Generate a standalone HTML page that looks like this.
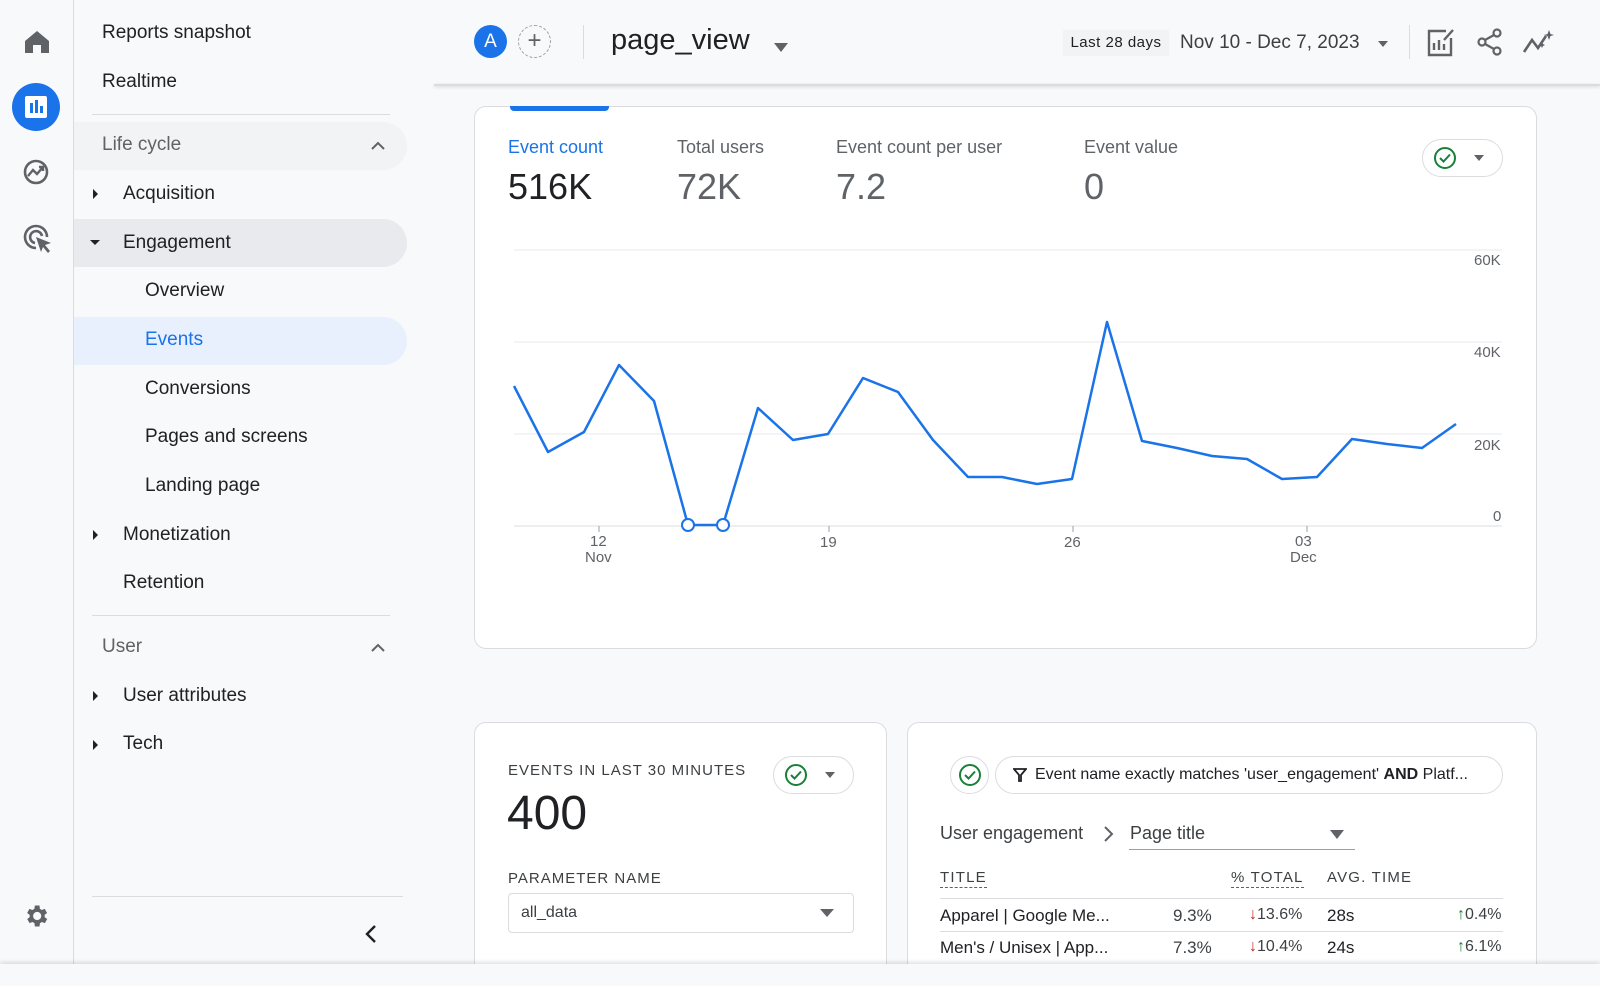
<!DOCTYPE html>
<html><head><meta charset="utf-8"><style>
*{box-sizing:border-box;margin:0;padding:0}
body{width:1600px;height:986px;background:#f8f9fa;font-family:"Liberation Sans",Arial,sans-serif;color:#202124;position:relative;overflow:hidden}
.abs{position:absolute}
.rail{left:0;top:0;width:74px;height:966px;border-right:1px solid #dadce0;background:#f8f9fa}
.nav{left:74px;top:0;width:360px;height:966px}
.item{position:absolute;font-size:19px;color:#202124}
.hl{position:absolute;left:74px;width:333px;height:48px;border-radius:0 24px 24px 0}
.card{position:absolute;background:#fff;border:1px solid #dadce0;border-radius:12px}
.lbl{font-size:18px;color:#5f6368}
.big{font-size:36px;color:#5f6368}
.tri{width:0;height:0;border-left:6px solid transparent;border-right:6px solid transparent;border-top:7px solid #5f6368;position:absolute}
.rtri{width:0;height:0;border-top:5px solid transparent;border-bottom:5px solid transparent;border-left:5px solid #202124;position:absolute}
.dtri{width:0;height:0;border-left:5px solid transparent;border-right:5px solid transparent;border-top:5px solid #202124;position:absolute}
.pill{position:absolute;border:1px solid #dadce0;border-radius:20px;background:#fff}
.ax{position:absolute;font-size:15px;color:#5f6368}
.row{position:absolute;font-size:17px;color:#202124}
</style></head><body>
<div class="abs rail">
 <svg class="abs" style="left:24px;top:30px" width="26" height="24" viewBox="0 0 26 24"><path d="M13 1 L25 11 V23 H17 V15 H9 V23 H1 V11 Z" fill="#5f6368"/></svg>
 <div class="abs" style="left:12px;top:83px;width:48px;height:48px;border-radius:50%;background:#1a73e8"></div>
 <div class="abs" style="left:25px;top:96px;width:22px;height:22px;background:#fff;border-radius:2px"></div>
 <div class="abs" style="left:30px;top:103px;width:3px;height:10px;background:#1a73e8"></div>
 <div class="abs" style="left:35px;top:100px;width:3px;height:13px;background:#1a73e8"></div>
 <div class="abs" style="left:40px;top:106px;width:3px;height:7px;background:#1a73e8"></div>
 <svg class="abs" style="left:22px;top:158px" width="30" height="30" viewBox="0 0 30 30"><circle cx="14" cy="14" r="11" fill="none" stroke="#5f6368" stroke-width="2.6"/><path d="M6 18 L11 12 L15 16 L21 9 M17 9 H21 V13" fill="none" stroke="#5f6368" stroke-width="2.4"/></svg>
 <svg class="abs" style="left:22px;top:223px" width="32" height="32" viewBox="0 0 32 32"><path d="M14 25 A11 11 0 1 1 25 14" fill="none" stroke="#5f6368" stroke-width="2.6"/><path d="M13 20 A6 6 0 1 1 20 13" fill="none" stroke="#5f6368" stroke-width="2.6"/><path d="M14 14 L29 20 L23 22 L28 28 L26 30 L21 24 L19 29 Z" fill="#5f6368"/></svg>
 <svg class="abs" style="left:22px;top:902px" width="28" height="28" viewBox="0 0 24 24"><path fill="#5f6368" d="M19.4 13a7.5 7.5 0 0 0 0-2l2.1-1.6-2-3.5-2.5 1a7 7 0 0 0-1.7-1L15 3h-4l-.4 2.9a7 7 0 0 0-1.7 1l-2.5-1-2 3.5L6.6 11a7.5 7.5 0 0 0 0 2l-2.1 1.6 2 3.5 2.5-1a7 7 0 0 0 1.7 1L11 21h4l.4-2.9a7 7 0 0 0 1.7-1l2.5 1 2-3.5zM13 15.5a3.5 3.5 0 1 1 0-7 3.5 3.5 0 0 1 0 7z"/></svg>
</div>
<div class="hl" style="top:122px;background:#f1f3f4"></div>
<div class="hl" style="top:219px;background:#e8eaed"></div>
<div class="hl" style="top:317px;background:#e8f0fe"></div>
<div class="item" style="left:102px;top:22px">Reports snapshot</div>
<div class="item" style="left:102px;top:71px">Realtime</div>
<div class="abs" style="left:92px;top:114px;width:298px;height:1px;background:#dadce0"></div>
<div class="item" style="left:102px;top:134px;color:#5f6368">Life cycle</div>
<svg class="abs" style="left:370px;top:140px" width="16" height="12"><path d="M2 9 L8 3 L14 9" fill="none" stroke="#5f6368" stroke-width="2"/></svg>
<div class="rtri" style="left:93px;top:189px"></div>
<div class="item" style="left:123px;top:183px">Acquisition</div>
<div class="dtri" style="left:90px;top:240px"></div>
<div class="item" style="left:123px;top:232px">Engagement</div>
<div class="item" style="left:145px;top:280px">Overview</div>
<div class="item" style="left:145px;top:329px;color:#1a73e8">Events</div>
<div class="item" style="left:145px;top:378px">Conversions</div>
<div class="item" style="left:145px;top:426px">Pages and screens</div>
<div class="item" style="left:145px;top:475px">Landing page</div>
<div class="rtri" style="left:93px;top:530px"></div>
<div class="item" style="left:123px;top:524px">Monetization</div>
<div class="item" style="left:123px;top:572px">Retention</div>
<div class="abs" style="left:92px;top:615px;width:298px;height:1px;background:#dadce0"></div>
<div class="item" style="left:102px;top:636px;color:#5f6368">User</div>
<svg class="abs" style="left:370px;top:642px" width="16" height="12"><path d="M2 9 L8 3 L14 9" fill="none" stroke="#5f6368" stroke-width="2"/></svg>
<div class="rtri" style="left:93px;top:691px"></div>
<div class="item" style="left:123px;top:685px">User attributes</div>
<div class="rtri" style="left:93px;top:740px"></div>
<div class="item" style="left:123px;top:733px">Tech</div>
<div class="abs" style="left:92px;top:896px;width:311px;height:1px;background:#dadce0"></div>
<svg class="abs" style="left:364px;top:924px" width="14" height="20"><path d="M11 2 L3 10 L11 18" fill="none" stroke="#202124" stroke-width="2.4"/></svg>

<!-- header -->
<div class="abs" style="left:434px;top:84px;width:1166px;height:2px;background:#dadce0;box-shadow:0 1px 3px rgba(0,0,0,.15)"></div>
<div class="abs" style="left:474px;top:25px;width:33px;height:33px;border-radius:50%;background:#1a73e8;color:#fff;font-size:19px;text-align:center;line-height:33px">A</div>
<div class="abs" style="left:518px;top:25px;width:33px;height:33px;border-radius:50%;border:1.5px dashed #9aa0a6;color:#5f6368;font-size:24px;text-align:center;line-height:29px">+</div>
<div class="abs" style="left:583px;top:25px;width:1px;height:34px;background:#dadce0"></div>
<div class="abs" style="left:611px;top:24px;font-size:29px;color:#202124">page_view</div>
<div class="tri" style="left:774px;top:43px;border-top-width:9px;border-left-width:7px;border-right-width:7px"></div>
<div class="abs" style="left:1063px;top:30px;width:106px;height:26px;background:#f1f3f4;font-size:15px;color:#202124;line-height:26px;text-align:center;letter-spacing:.5px">Last 28 days</div>
<div class="abs" style="left:1180px;top:32px;font-size:19px;color:#3c4043">Nov 10 - Dec 7, 2023</div>
<div class="tri" style="left:1378px;top:41px;border-left-width:5px;border-right-width:5px;border-top-width:6px"></div>
<div class="abs" style="left:1409px;top:25px;width:1px;height:34px;background:#dadce0"></div>
<svg class="abs" style="left:1426px;top:28px" width="30" height="30" viewBox="0 0 30 30"><path d="M20 3 H3 V27 H25 V10" fill="none" stroke="#5f6368" stroke-width="2.4"/><path d="M8 22 V15 M13 22 V12 M18 22 V16" stroke="#5f6368" stroke-width="2.4"/><path d="M18 12 L27 2" stroke="#5f6368" stroke-width="2.4"/></svg>
<svg class="abs" style="left:1476px;top:28px" width="28" height="28" viewBox="0 0 28 28"><circle cx="21" cy="5" r="3.5" fill="none" stroke="#5f6368" stroke-width="2.2"/><circle cx="6" cy="14" r="3.5" fill="none" stroke="#5f6368" stroke-width="2.2"/><circle cx="21" cy="23" r="3.5" fill="none" stroke="#5f6368" stroke-width="2.2"/><path d="M9 12 L18 7 M9 16 L18 21" stroke="#5f6368" stroke-width="2.2"/></svg>
<svg class="abs" style="left:1522px;top:28px" width="34" height="28" viewBox="0 0 34 28"><path d="M2 24 L10 12 L16 20 L24 8" fill="none" stroke="#5f6368" stroke-width="2.6"/><path d="M27 2 L28.5 6 L32 7 L28.5 8 L27 12 L25.5 8 L22 7 L25.5 6 Z" fill="#5f6368"/><path d="M20 14 l1 2 2 1 -2 1 -1 2 -1 -2 -2 -1 2 -1z" fill="#5f6368"/></svg>

<!-- main card -->
<div class="card" style="left:474px;top:106px;width:1063px;height:543px"></div>
<div class="abs" style="left:510px;top:106px;width:99px;height:5px;background:#1a73e8;border-radius:0 0 4px 4px"></div>
<div class="abs lbl" style="left:508px;top:137px;color:#1a73e8">Event count</div>
<div class="abs big" style="left:508px;top:166px;color:#202124">516K</div>
<div class="abs lbl" style="left:677px;top:137px">Total users</div>
<div class="abs big" style="left:677px;top:166px">72K</div>
<div class="abs lbl" style="left:836px;top:137px">Event count per user</div>
<div class="abs big" style="left:836px;top:166px">7.2</div>
<div class="abs lbl" style="left:1084px;top:137px">Event value</div>
<div class="abs big" style="left:1084px;top:166px">0</div>
<div class="pill" style="left:1422px;top:139px;width:81px;height:38px"></div>
<svg class="abs" style="left:1433px;top:146px" width="24" height="24" viewBox="0 0 24 24"><circle cx="12" cy="12" r="10" fill="none" stroke="#188038" stroke-width="2"/><path d="M7 12 L10.5 15.5 L17 8.5" fill="none" stroke="#188038" stroke-width="2"/></svg>
<div class="tri" style="left:1474px;top:155px;border-left-width:5px;border-right-width:5px;border-top-width:6px"></div>
<svg class="abs" style="left:0;top:0" width="1600" height="986">
<g stroke="#e8eaed" stroke-width="1"><line x1="514" y1="250" x2="1502" y2="250"/><line x1="514" y1="342" x2="1502" y2="342"/><line x1="514" y1="434" x2="1502" y2="434"/></g>
<line x1="514" y1="526" x2="1502" y2="526" stroke="#dadce0"/>
<g stroke="#9aa0a6"><line x1="599" y1="526" x2="599" y2="532"/><line x1="829" y1="526" x2="829" y2="532"/><line x1="1073" y1="526" x2="1073" y2="532"/><line x1="1307" y1="526" x2="1307" y2="532"/></g>
<polyline fill="none" stroke="#1a73e8" stroke-width="2.5" stroke-linejoin="round" points="514,386 548,452 584,432 619,365 654,401 688,525 723,525 758,408 793,440 828,434 863,378 898,392 933,440 968,477 1002,477 1037,484 1072,479 1107,322 1142,441 1177,448 1212,456 1247,459 1282,479 1317,477 1352,439 1387,444 1422,448 1456,424"/>
<circle cx="688" cy="525" r="6" fill="#fff" stroke="#1a73e8" stroke-width="2"/>
<circle cx="723" cy="525" r="6" fill="#fff" stroke="#1a73e8" stroke-width="2"/>
</svg>
<div class="ax" style="left:1474px;top:252px">60K</div>
<div class="ax" style="left:1474px;top:344px">40K</div>
<div class="ax" style="left:1474px;top:437px">20K</div>
<div class="ax" style="left:1493px;top:508px">0</div>
<div class="ax" style="left:585px;top:534px;text-align:center;line-height:16px">12<br>Nov</div>
<div class="ax" style="left:820px;top:534px">19</div>
<div class="ax" style="left:1064px;top:534px">26</div>
<div class="ax" style="left:1290px;top:534px;text-align:center;line-height:16px">03<br>Dec</div>

<!-- bottom left card -->
<div class="card" style="left:474px;top:722px;width:413px;height:260px"></div>
<div class="abs" style="left:508px;top:762px;font-size:15px;color:#3c4043;letter-spacing:1px">EVENTS IN LAST 30 MINUTES</div>
<div class="abs" style="left:507px;top:786px;font-size:48px;color:#202124">400</div>
<div class="pill" style="left:773px;top:756px;width:81px;height:38px"></div>
<svg class="abs" style="left:784px;top:763px" width="24" height="24" viewBox="0 0 24 24"><circle cx="12" cy="12" r="10" fill="none" stroke="#188038" stroke-width="2"/><path d="M7 12 L10.5 15.5 L17 8.5" fill="none" stroke="#188038" stroke-width="2"/></svg>
<div class="tri" style="left:825px;top:772px;border-left-width:5px;border-right-width:5px;border-top-width:6px"></div>
<div class="abs" style="left:508px;top:870px;font-size:15px;color:#3c4043;letter-spacing:1px">PARAMETER NAME</div>
<div class="abs" style="left:508px;top:893px;width:346px;height:40px;border:1px solid #dadce0;border-radius:4px;font-size:16px;color:#3c4043;padding:10px 12px">all_data</div>
<div class="tri" style="left:820px;top:909px;border-left-width:7px;border-right-width:7px;border-top-width:8px"></div>

<!-- bottom right card -->
<div class="card" style="left:907px;top:722px;width:630px;height:260px"></div>
<div class="pill" style="left:950px;top:756px;width:39px;height:38px"></div>
<svg class="abs" style="left:958px;top:763px" width="24" height="24" viewBox="0 0 24 24"><circle cx="12" cy="12" r="10" fill="none" stroke="#188038" stroke-width="2"/><path d="M7 12 L10.5 15.5 L17 8.5" fill="none" stroke="#188038" stroke-width="2"/></svg>
<div class="pill" style="left:995px;top:756px;width:508px;height:38px"></div>
<svg class="abs" style="left:1013px;top:768px" width="14" height="14" viewBox="0 0 14 14"><path d="M1 1 H13 L8 7 V13 H6 V7 Z" fill="none" stroke="#202124" stroke-width="1.8"/></svg>
<div class="abs" style="left:1035px;top:766px;font-size:16px;color:#202124">Event name exactly matches 'user_engagement' <b>AND</b> Platf...</div>
<div class="abs" style="left:940px;top:823px;font-size:18px;color:#3c4043">User engagement</div>
<svg class="abs" style="left:1102px;top:825px" width="14" height="18"><path d="M3 2 L10 9 L3 16" fill="none" stroke="#5f6368" stroke-width="2"/></svg>
<div class="abs" style="left:1130px;top:823px;font-size:18px;color:#3c4043">Page title</div>
<div class="abs" style="left:1129px;top:849px;width:226px;height:1px;background:#9aa0a6"></div>
<div class="tri" style="left:1330px;top:830px;border-left-width:7px;border-right-width:7px;border-top-width:9px"></div>
<div class="abs" style="left:940px;top:869px;font-size:15px;color:#3c4043;letter-spacing:1.2px;border-bottom:1px dashed #5f6368;padding-bottom:1px">TITLE</div>
<div class="abs" style="left:1231px;top:869px;font-size:15px;color:#3c4043;letter-spacing:1.2px;border-bottom:1px dashed #5f6368;padding-bottom:1px">% TOTAL</div>
<div class="abs" style="left:1327px;top:869px;font-size:15px;color:#3c4043;letter-spacing:1.2px">AVG. TIME</div>
<div class="abs" style="left:940px;top:898px;width:563px;height:1px;background:#dadce0"></div>
<div class="abs" style="left:940px;top:931px;width:563px;height:1px;background:#dadce0"></div>
<div class="row" style="left:940px;top:906px">Apparel | Google Me...</div>
<div class="row" style="left:1173px;top:906px;color:#3c4043">9.3%</div>
<div class="row" style="left:1249px;top:906px;font-size:16px;color:#3c4043"><span style="color:#c5221f">↓</span>13.6%</div>
<div class="row" style="left:1327px;top:906px">28s</div>
<div class="row" style="left:1457px;top:906px;font-size:16px;color:#3c4043"><span style="color:#188038">↑</span>0.4%</div>
<div class="row" style="left:940px;top:938px">Men's / Unisex | App...</div>
<div class="row" style="left:1173px;top:938px;color:#3c4043">7.3%</div>
<div class="row" style="left:1249px;top:938px;font-size:16px;color:#3c4043"><span style="color:#c5221f">↓</span>10.4%</div>
<div class="row" style="left:1327px;top:938px">24s</div>
<div class="row" style="left:1457px;top:938px;font-size:16px;color:#3c4043"><span style="color:#188038">↑</span>6.1%</div>

<div class="abs" style="left:0;top:964px;width:1600px;height:22px;background:#f8f9fa;box-shadow:0 -2px 4px rgba(0,0,0,.12)"></div>
</body></html>
